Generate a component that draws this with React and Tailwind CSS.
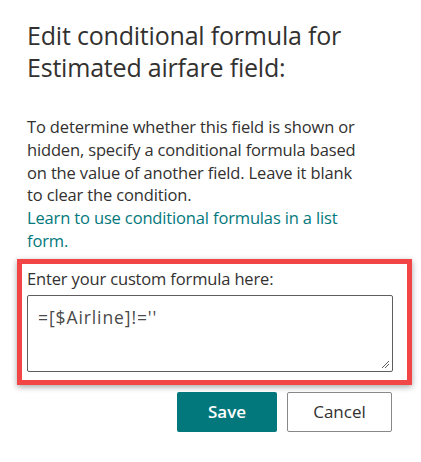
export default function App() {
  const font = { fontFamily: '"Open Sans", "Noto Sans", sans-serif' };
  return (
    <div className="w-[421px] h-[462px] bg-white text-[#323130]" style={font}>
      <div className="pl-[27px] pt-[19px]">
        <h1 className="text-[25px] leading-[32px] font-normal tracking-[-0.2px] text-[#323130] whitespace-nowrap">
          Edit conditional formula for
          <br />
          Estimated airfare field:
        </h1>
        <p className="mt-[33px] text-[16.5px] leading-[22.8px] tracking-[-0.15px] text-[#323130] whitespace-nowrap">
          To determine whether this field is shown or
          <br />
          hidden, specify a conditional formula based
          <br />
          on the value of another field. Leave it blank
          <br />
          to clear the condition.
          <br />
          <span className="text-[#03787c]">
            Learn to use conditional formulas in a list
            <br />
            form.
          </span>
        </p>
      </div>
      <div className="ml-[17px] mt-[6px] w-[395px] h-[126px] border-[5px] border-[#f24545] shadow-[0_2px_6px_rgba(0,0,0,0.35)] pl-[5px] pr-[14px] pt-[3px]">
        <div className="text-[16.5px] leading-[24px] tracking-[-0.15px] text-[#323130] whitespace-nowrap">
          Enter your custom formula here:
        </div>
        <div className="mt-[4px] h-[77px] border border-[#605e5c] rounded-[2px] pl-[10px] pt-[10px] relative">
          <span className="text-[17.5px] leading-[22px] tracking-[0.9px] font-normal text-[#4a4a4a]">=[$Airline]!=''</span>
          <svg className="absolute right-[2px] bottom-[2px]" width="9" height="9" viewBox="0 0 9 9">
            <line x1="1" y1="8" x2="8" y2="1" stroke="#605e5c" strokeWidth="1" />
            <line x1="4" y1="8" x2="8" y2="4" stroke="#605e5c" strokeWidth="1" />
          </svg>
        </div>
      </div>
      <div className="flex justify-end gap-[10px] pr-[29px] mt-[7px]">
        <button className="w-[100px] h-[40px] rounded-[2px] bg-[#03787c] text-white text-[17px] font-semibold">
          Save
        </button>
        <button className="w-[105px] h-[40px] rounded-[2px] border border-[#8a8886] bg-white text-[#323130] text-[17px]">
          Cancel
        </button>
      </div>
    </div>
  );
}
